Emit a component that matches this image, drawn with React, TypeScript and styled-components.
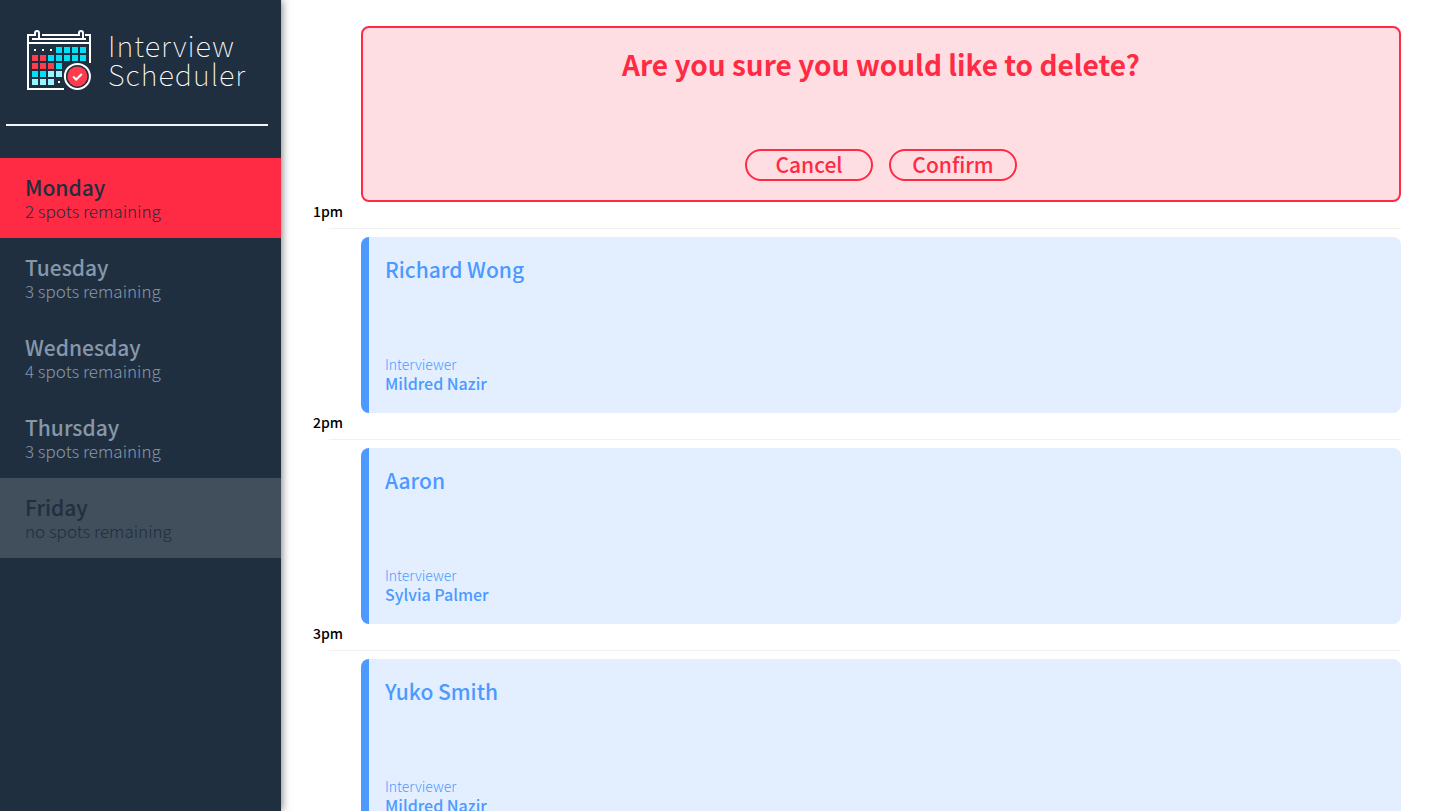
import React from "react";
import styled, { createGlobalStyle } from "styled-components";

const GlobalStyle = createGlobalStyle`
  *, *::before, *::after { box-sizing: border-box; }
  body {
    margin: 0;
    background: #fff;
    color: #000;
    font-family: "Noto Sans CJK JP", "Noto Sans", sans-serif;
    font-size: 16px;
    line-height: 24px;
    -webkit-font-smoothing: antialiased;
  }
  h1, h2, h3, h4, p { margin: 0; }
`;

const Layout = styled.div`
  display: flex;
  height: 100vh;
`;

const Sidebar = styled.aside`
  flex: 0 0 281px;
  background: #202f3f;
  box-shadow: 1px 0 8px rgba(0, 0, 0, 0.5);
  z-index: 1;
`;

const Brand = styled.h1`
  display: flex;
  align-items: center;
  gap: 15px;
  height: 124px;
  padding: 0 0 4px 26px;
`;

const BrandName = styled.span`
  padding-bottom: 2px;
  font-size: 29px;
  font-weight: 100;
  line-height: 29px;
  letter-spacing: 1px;
  color: #fff;
`;

const Divider = styled.hr`
  height: 2px;
  margin: 0 13px 32px 6px;
  border: 0;
  background: #f2f6fa;
`;

const DayList = styled.ul`
  margin: 0;
  padding: 0;
  list-style: none;
`;

type DayState = "selected" | "open" | "full";

const dayColors: Record<DayState, [string, string]> = {
  selected: ["#ff2a44", "#202f3f"],
  open: ["transparent", "#8697aa"],
  full: ["#414e5b", "#202f3f"],
};

const DayButton = styled.button<{ $state: DayState }>`
  display: block;
  width: 100%;
  height: 80px;
  padding: 2px 25px 0;
  border: 0;
  background: ${(p) => dayColors[p.$state][0]};
  color: ${(p) => dayColors[p.$state][1]};
  font-family: inherit;
  text-align: left;
  cursor: pointer;
`;

const DayName = styled.span`
  display: block;
  font-size: 21px;
  font-weight: 500;
  line-height: 24px;
`;

const DaySpots = styled.span`
  display: block;
  font-size: 17px;
  font-weight: 300;
  line-height: 24px;
`;

const Schedule = styled.main`
  flex: 1;
  min-width: 0;
  padding: 26px 30px 32px 32px;
  overflow-y: auto;
  scrollbar-width: none;
`;

const Hour = styled.header`
  display: flex;
  flex-direction: column;
  height: 35px;
`;

const Time = styled.h4`
  font-size: 14px;
  font-weight: 500;
  line-height: 18px;
`;

const Rule = styled.hr`
  width: calc(100% - 16px);
  height: 1px;
  margin: 8px 0 0 16px;
  border: 0;
  background: #f1f1f1;
`;

const Confirmation = styled.section`
  display: flex;
  flex-direction: column;
  align-items: center;
  justify-content: space-between;
  height: 176px;
  margin-left: 48px;
  padding: 17px 24px 19px;
  border: 2px solid #ff2a44;
  border-radius: 8px;
  background: #ffdee3;
  color: #ff2a44;
`;

const Question = styled.h2`
  font-size: 28px;
  font-weight: 700;
  line-height: 38px;
`;

const Actions = styled.div`
  display: flex;
  gap: 16px;
`;

const ActionButton = styled.button`
  display: flex;
  align-items: center;
  justify-content: center;
  width: 128px;
  height: 32px;
  padding: 0 0 1px;
  border: 2px solid #ff2a44;
  border-radius: 16px;
  background: transparent;
  color: #ff2a44;
  font-family: inherit;
  font-size: 21px;
  font-weight: 500;
  line-height: 25px;
  cursor: pointer;
`;

const Card = styled.article`
  display: flex;
  flex-direction: column;
  justify-content: space-between;
  height: 176px;
  margin-left: 48px;
  padding: 17px 24px 20px 16px;
  border-left: 8px solid #4c9aff;
  border-radius: 8px;
  background: #e3efff;
  color: #4c9aff;
`;

const Student = styled.h2`
  font-size: 21px;
  font-weight: 500;
  line-height: 30px;
`;

const Label = styled.h4`
  font-size: 14px;
  font-weight: 300;
  line-height: 18px;
`;

const Interviewer = styled.h3`
  font-size: 16px;
  font-weight: 500;
  line-height: 20px;
`;

const CYAN = "#00e0f7";
const PALE = "#99f5ff";
const RED = "#ff3b4c";
const DOT = "dot";

const calendarRows = [
  [DOT, DOT, DOT, CYAN, CYAN, CYAN, CYAN],
  [RED, RED, CYAN, CYAN, CYAN, CYAN, CYAN],
  [RED, RED, RED, CYAN],
  [CYAN, CYAN, PALE, PALE],
  [PALE, PALE, PALE, DOT],
];

function CalendarLogo() {
  return (
    <svg width="67" height="63" viewBox="0 0 67 63" fill="none" aria-hidden="true">
      <g stroke="#fff" strokeWidth="2">
        <path d="M9 6H2V60H38M16 6H52M59 6H64V34M2 14H64M6 10H60" />
        <path d="M9 7V4a2 2 0 0 1 4 0V10M53 7V4a2 2 0 0 1 4 0V10" />
      </g>
      {calendarRows.map((row, y) =>
        row.map((fill, x) =>
          fill === DOT ? (
            <rect key={`${x}-${y}`} x={8 + x * 8} y={20 + y * 8} width="2" height="2" fill="#fff" />
          ) : (
            <rect key={`${x}-${y}`} x={6 + x * 8} y={18 + y * 8} width="6" height="6" fill={fill} />
          )
        )
      )}
      <circle cx="51.4" cy="47.4" r="12.5" fill="#202f3f" stroke="#fff" strokeWidth="2" />
      <circle cx="51.4" cy="47.4" r="10" fill={RED} />
      <path d="M47 47.5l3.2 3 5.6-5.5" stroke="#fff" strokeWidth="2" />
    </svg>
  );
}

const days: { name: string; spots: string; state: DayState }[] = [
  { name: "Monday", spots: "2 spots remaining", state: "selected" },
  { name: "Tuesday", spots: "3 spots remaining", state: "open" },
  { name: "Wednesday", spots: "4 spots remaining", state: "open" },
  { name: "Thursday", spots: "3 spots remaining", state: "open" },
  { name: "Friday", spots: "no spots remaining", state: "full" },
];

const appointments = [
  { time: "1pm", student: "Richard Wong", interviewer: "Mildred Nazir" },
  { time: "2pm", student: "Aaron", interviewer: "Sylvia Palmer" },
  { time: "3pm", student: "Yuko Smith", interviewer: "Mildred Nazir" },
];

export default function App() {
  return (
    <>
      <GlobalStyle />
      <Layout>
        <Sidebar>
          <Brand>
            <CalendarLogo />
            <BrandName>
              Interview
              <br />
              Scheduler
            </BrandName>
          </Brand>
          <Divider />
          <nav>
            <DayList>
              {days.map((day) => (
                <li key={day.name}>
                  <DayButton type="button" $state={day.state}>
                    <DayName>{day.name}</DayName>
                    <DaySpots>{day.spots}</DaySpots>
                  </DayButton>
                </li>
              ))}
            </DayList>
          </nav>
        </Sidebar>
        <Schedule>
          <Confirmation>
            <Question>Are you sure you would like to delete?</Question>
            <Actions>
              <ActionButton type="button">Cancel</ActionButton>
              <ActionButton type="button">Confirm</ActionButton>
            </Actions>
          </Confirmation>
          {appointments.map((item) => (
            <React.Fragment key={item.time}>
              <Hour>
                <Time>{item.time}</Time>
                <Rule />
              </Hour>
              <Card>
                <Student>{item.student}</Student>
                <div>
                  <Label>Interviewer</Label>
                  <Interviewer>{item.interviewer}</Interviewer>
                </div>
              </Card>
            </React.Fragment>
          ))}
        </Schedule>
      </Layout>
    </>
  );
}
